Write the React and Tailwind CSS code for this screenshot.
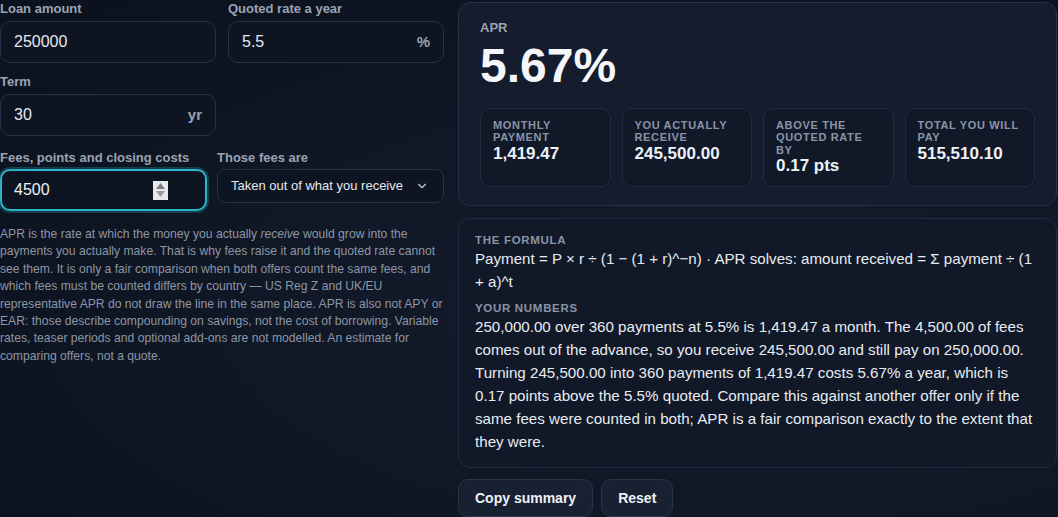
import { ChevronDown } from 'lucide-react'

const font = { fontFamily: '"Liberation Sans", Arial, sans-serif' }

function Field({ label, value, suffix, className = '' }) {
  return (
    <label className={`flex flex-col ${className}`}>
      <span className="h-[21px] text-[13px] font-bold leading-[17px] text-[#9aa3b2]">{label}</span>
      <div className="flex h-[42px] items-center rounded-[10px] border border-[#283244] bg-[#0d1422] px-[13px]">
        <span className="flex-1 text-[16px] text-[#e5e9f0]">{value}</span>
        {suffix && <span className="text-[15px] font-bold text-[#9aa3b2]">{suffix}</span>}
      </div>
    </label>
  )
}

function Stat({ label, value }) {
  return (
    <div className="h-[79px] rounded-[10px] border border-[#222c3d] bg-[#111929] px-[12px] pt-[10px]">
      <div className="text-[11px] font-bold uppercase leading-[12.3px] tracking-[0.06em] text-[#8a94a6]">{label}</div>
      <div className="text-[17px] font-bold leading-[20px] text-[#eef1f6]">{value}</div>
    </div>
  )
}

export default function App() {
  return (
    <div
      className="h-[517px] w-[1058px] overflow-hidden bg-[radial-gradient(ellipse_at_70%_60%,#151d2e_0%,#0f1624_55%,#0b111d_100%)]"
      style={font}
    >
      <div className="flex gap-[14px]">
        <div className="w-[444px] shrink-0">
          <div className="grid grid-cols-2 gap-x-[12px]">
            <Field label="Loan amount" value="250000" />
            <Field label="Quoted rate a year" value="5.5" suffix="%" />
          </div>
          <div className="mt-[10px] grid grid-cols-2 gap-x-[12px]">
            <Field label="Term" value="30" suffix="yr" />
          </div>
          <div className="mt-[14px] flex gap-[10px]">
            <label className="flex w-[207px] flex-col">
              <span className="h-[19px] text-[13px] font-bold leading-[16px] text-[#9aa3b2]">
                Fees, points and closing costs
              </span>
              <div className="flex h-[42px] items-center rounded-[10px] border-2 border-[#2bb3c6] bg-[#0c1321] px-[12px] shadow-[0_0_0_2px_rgba(43,179,198,0.25)]">
                <span className="flex-1 text-[16px] text-[#eef1f6]">4500</span>
                <span className="mr-[25px] flex h-[19px] w-[15px] flex-col items-center justify-center gap-[2px] bg-[#e9e9e9]">
                  <svg width="9" height="6" viewBox="0 0 9 6"><path d="M4.5 0L9 6H0z" fill="#7d7d7d" /></svg>
                  <svg width="9" height="6" viewBox="0 0 9 6"><path d="M0 0h9L4.5 6z" fill="#9b9b9b" /></svg>
                </span>
              </div>
            </label>
            <label className="flex flex-1 flex-col">
              <span className="h-[19px] text-[13px] font-bold leading-[16px] text-[#9aa3b2]">Those fees are</span>
              <div className="flex h-[34px] items-center rounded-[8px] border border-[#283244] bg-[#0d1422] pl-[13px] pr-[14px]">
                <span className="flex-1 text-[13px] text-[#e5e9f0]">Taken out of what you receive</span>
                <ChevronDown size={14} strokeWidth={2} className="text-[#c3c9d3]" />
              </div>
            </label>
          </div>
          <p className="mt-[15px] text-[12.15px] leading-[17.4px] text-[#8d96a5]">
            APR is the rate at which the money you actually <em>receive</em> would grow into the payments you
            actually make. That is why fees raise it and the quoted rate cannot see them. It is only a fair
            comparison when both offers count the same fees, and which fees must be counted differs by country — US
            Reg Z and UK/EU representative APR do not draw the line in the same place. APR is also not APY or EAR:
            those describe compounding on savings, not the cost of borrowing. Variable rates, teaser periods and
            optional add-ons are not modelled. An estimate for comparing offers, not a quote.
          </p>
        </div>

        <div className="w-[599px] shrink-0 pt-[2px]">
          <section className="h-[204px] rounded-[12px] border border-[#243045] bg-[#141c2d] px-[21px] pt-[17px]">
            <div className="text-[13px] font-bold leading-[16px] text-[#9aa3b2]">APR</div>
            <div className="mt-[4px] text-[48px] font-bold leading-[52px] text-[#f4f6fa]">5.67%</div>
            <div className="mt-[16px] grid grid-cols-4 gap-[11px]">
              <Stat label="Monthly payment" value="1,419.47" />
              <Stat label="You actually receive" value="245,500.00" />
              <Stat label="Above the quoted rate by" value="0.17 pts" />
              <Stat label="Total you will pay" value="515,510.10" />
            </div>
          </section>

          <section className="mt-[12px] rounded-[12px] border border-[#222c3e] bg-[#111827] px-[16px] pb-[14px] pt-[14px]">
            <div className="text-[11.5px] font-bold uppercase leading-[14px] tracking-[0.06em] text-[#8a94a6]">
              The formula
            </div>
            <div className="text-[15.15px] leading-[23px] text-[#e8ecf2]">
              Payment = P × r ÷ (1 − (1 + r)^−n) · APR solves: amount received = Σ payment ÷ (1 + a)^t
            </div>
            <div className="mt-[8px] text-[11.5px] font-bold uppercase leading-[14px] tracking-[0.06em] text-[#8a94a6]">
              Your numbers
            </div>
            <div className="text-[15.15px] leading-[23px] text-[#e8ecf2]">
              250,000.00 over 360 payments at 5.5% is 1,419.47 a month. The 4,500.00 of fees comes out of the
              advance, so you receive 245,500.00 and still pay on 250,000.00. Turning 245,500.00 into 360 payments of
              1,419.47 costs 5.67% a year, which is 0.17 points above the 5.5% quoted. Compare this against another
              offer only if the same fees were counted in both; APR is a fair comparison exactly to the extent that
              they were.
            </div>
          </section>

          <div className="mt-[11px] flex gap-[8px]">
            <button className="h-[38px] rounded-[10px] border border-[#2a3447] bg-[#182132] px-[16px] text-[14px] font-bold text-[#eef1f6]">
              Copy summary
            </button>
            <button className="h-[38px] rounded-[10px] border border-[#2a3447] bg-[#182132] px-[16px] text-[14px] font-bold text-[#eef1f6]">
              Reset
            </button>
          </div>
        </div>
      </div>
    </div>
  )
}
